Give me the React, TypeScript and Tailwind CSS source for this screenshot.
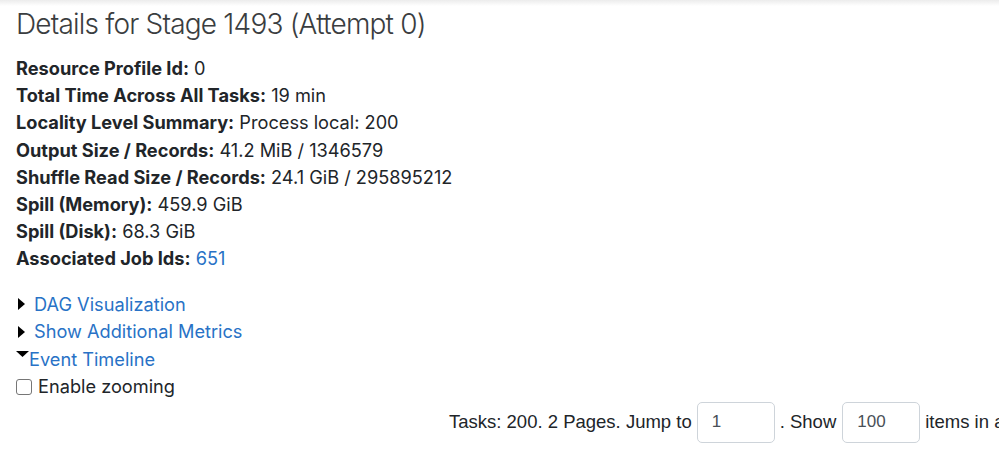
import React from 'react';

const rows: [string, React.ReactNode][] = [
  ['Resource Profile Id:', '0'],
  ['Total Time Across All Tasks:', '19 min'],
  ['Locality Level Summary:', 'Process local: 200'],
  ['Output Size / Records:', '41.2 MiB / 1346579'],
  ['Shuffle Read Size / Records:', '24.1 GiB / 295895212'],
  ['Spill (Memory):', '459.9 GiB'],
  ['Spill (Disk):', '68.3 GiB'],
];

const sys = { fontFamily: 'Inter, "Noto Sans", sans-serif' };

function RightArrow() {
  return (
    <svg width="8" height="12" viewBox="0 0 8 12" className="mr-[8px] ml-[2px] shrink-0">
      <path d="M0 0 L7 6 L0 12 Z" fill="#000" />
    </svg>
  );
}

export default function App() {
  return (
    <div className="relative h-[455px] w-[999px] overflow-hidden bg-white text-[#212529]">
      <div className="absolute inset-x-0 top-0 h-[6px] bg-gradient-to-b from-[#ececec] to-white" />
      <div className="px-4 pt-[6px]">
        <h3
          className="text-[28px] font-light leading-[36px] tracking-[-0.8px] text-[#3a3d40]"
          style={sys}
        >
          Details for Stage 1493 (Attempt 0)
        </h3>
        <ul className="mt-[13px] text-[18.2px] leading-[27.2px]" style={sys}>
          {rows.map(([k, v]) => (
            <li key={k}>
              <strong className="font-bold">{k}</strong> {v}
            </li>
          ))}
          <li>
            <strong className="font-bold">Associated Job Ids:</strong>{' '}
            <a className="text-[#2872c6]">651</a>
          </li>
        </ul>
        <div className="mt-[18px] text-[18.2px] leading-[27.5px]" style={sys}>
          <div className="flex items-center">
            <RightArrow />
            <a className="text-[#2872c6]">DAG Visualization</a>
          </div>
          <div className="flex items-center">
            <RightArrow />
            <a className="text-[#2872c6]">Show Additional Metrics</a>
          </div>
          <div className="flex items-center">
            <svg width="13" height="7" viewBox="0 0 13 7" className="-mt-[10px] shrink-0">
              <path d="M0 0 L13 0 L6.5 6 Z" fill="#000" />
            </svg>
            <a className="text-[#2872c6]">Event Timeline</a>
          </div>
          <label className="flex items-center">
            <span className="mr-[6px] inline-block h-[16px] w-[16px] shrink-0 rounded-[3px] border border-[#767676] bg-white" />
            <span>Enable zooming</span>
          </label>
        </div>
        <div
          className="mt-[1px] ml-[433px] flex items-center whitespace-nowrap text-[18.5px]"
          style={{ fontFamily: '"Liberation Sans", Arial, sans-serif' }}
        >
          <span className="shrink-0">Tasks: 200. 2 Pages. Jump to</span>
          <div className="ml-[5px] flex h-[41px] w-[78px] shrink-0 items-center rounded-[5px] border border-[#ced4da] px-[14px] text-[17px] text-[#495057]">
            1
          </div>
          <span className="ml-[5px] shrink-0">. Show</span>
          <div className="ml-[6px] flex h-[41px] w-[78px] shrink-0 items-center rounded-[5px] border border-[#ced4da] px-[14px] text-[17px] text-[#495057]">
            100
          </div>
          <span className="ml-[5px] shrink-0">items in a page. Go</span>
        </div>
      </div>
    </div>
  );
}
